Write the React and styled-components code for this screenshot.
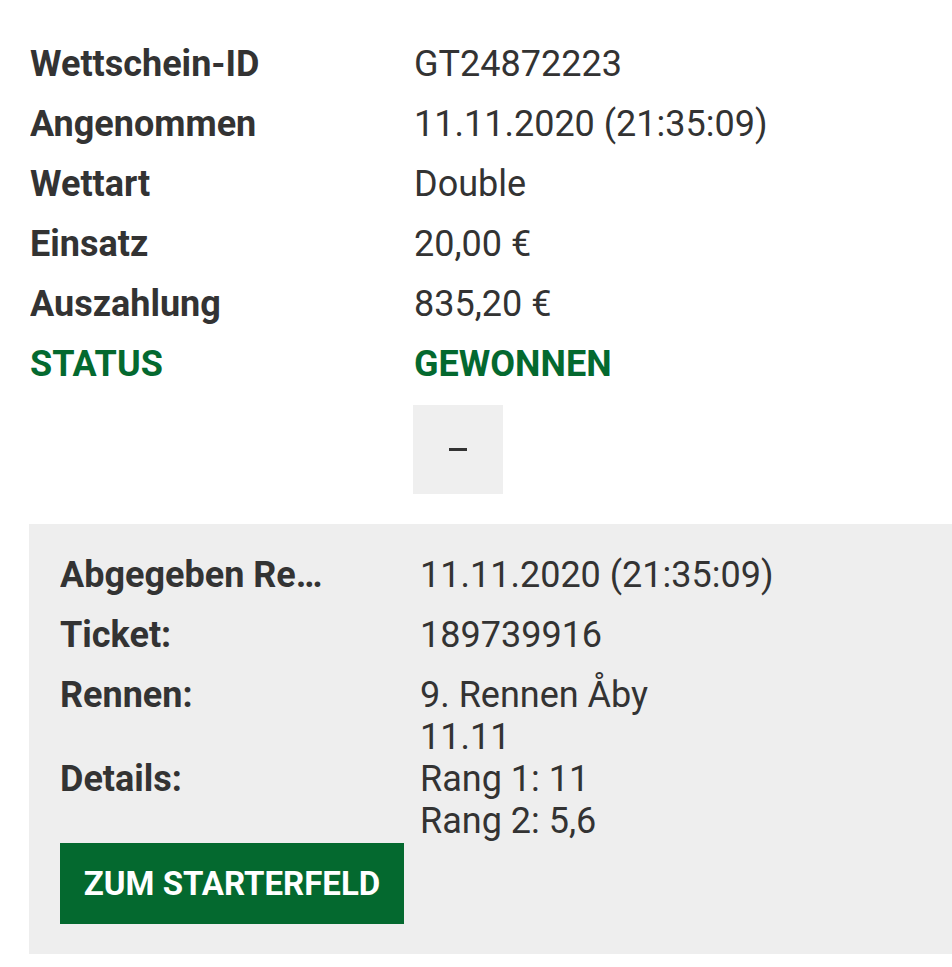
import React from "react";
import styled, { createGlobalStyle } from "styled-components";

const GlobalStyle = createGlobalStyle`
  html, body {
    margin: 0;
    padding: 0;
    background: #ffffff;
  }
  body {
    font-family: Roboto, "Noto Sans", Arial, sans-serif;
    color: #333333;
  }
`;

const Page = styled.div`
  width: 952px;
  padding-top: 43px;
  padding-bottom: 15px;
  box-sizing: border-box;
`;

const Summary = styled.div`
  padding-left: 30px;
  display: flex;
  flex-direction: column;
  gap: 18px;
`;

const Row = styled.div`
  display: flex;
  font-size: 36px;
  line-height: 42px;
  color: ${props => (props.$accent ? "#04692f" : "#333333")};
  font-weight: ${props => (props.$accent ? 700 : 400)};
`;

const Label = styled.div`
  flex: 0 0 ${props => props.$width || 384}px;
  font-weight: 700;
  white-space: nowrap;
  overflow: hidden;
  text-overflow: ellipsis;
`;

const Value = styled.div`
  padding-left: ${props => props.$indent || 0}px;
`;

const ToggleWrap = styled.div`
  padding-left: 413px;
  margin-top: 20px;
`;

const ToggleButton = styled.button`
  width: 90px;
  height: 89px;
  border: 0;
  background: #efefef;
  display: flex;
  align-items: center;
  justify-content: center;
  padding: 0;
  cursor: pointer;
`;

const Minus = styled.span`
  width: 18px;
  height: 3px;
  background: #333333;
`;

const Panel = styled.div`
  margin-top: 30px;
  margin-left: 29px;
  background: #eeeeee;
  padding: 30px 0 30px 31px;
`;

const PanelRows = styled.div`
  display: flex;
  flex-direction: column;
`;

const PanelRow = styled(Row)`
  margin-bottom: ${props => (props.$dense ? 0 : 18)}px;
`;

const Lines = styled.div`
  display: flex;
  flex-direction: column;
`;

const StarterButton = styled.button`
  margin-top: 1px;
  width: 344px;
  height: 81px;
  border: 0;
  background: #04692f;
  color: #ffffff;
  font-family: Roboto, "Noto Sans", Arial, sans-serif;
  font-size: 33px;
  font-weight: 700;
  padding: 0;
  cursor: pointer;
`;

const summary = [
  ["Wettschein-ID", "GT24872223"],
  ["Angenommen", "11.11.2020 (21:35:09)"],
  ["Wettart", "Double"],
  ["Einsatz", "20,00 €"],
  ["Auszahlung", "835,20 €"],
];

const App = () => {
  return (
    <Page>
      <GlobalStyle />
      <Summary>
        {summary.map(([label, value]) => (
          <Row key={label}>
            <Label>{label}</Label>
            <Value>{value}</Value>
          </Row>
        ))}
        <Row $accent>
          <Label>STATUS</Label>
          <Value>GEWONNEN</Value>
        </Row>
      </Summary>
      <ToggleWrap>
        <ToggleButton aria-label="Einklappen">
          <Minus />
        </ToggleButton>
      </ToggleWrap>
      <Panel>
        <PanelRows>
          <PanelRow>
            <Label $width={266}>Abgegeben Rennbahn:</Label>
            <Value $indent={94}>11.11.2020 (21:35:09)</Value>
          </PanelRow>
          <PanelRow>
            <Label $width={360}>Ticket:</Label>
            <Value>189739916</Value>
          </PanelRow>
          <PanelRow $dense>
            <Label $width={360}>Rennen:</Label>
            <Lines>
              <span>9. Rennen Åby</span>
              <span>11.11</span>
            </Lines>
          </PanelRow>
          <PanelRow $dense>
            <Label $width={360}>Details:</Label>
            <Lines>
              <span>Rang 1: 11</span>
              <span>Rang 2: 5,6</span>
            </Lines>
          </PanelRow>
        </PanelRows>
        <StarterButton>ZUM STARTERFELD</StarterButton>
      </Panel>
    </Page>
  );
};

export default App;
